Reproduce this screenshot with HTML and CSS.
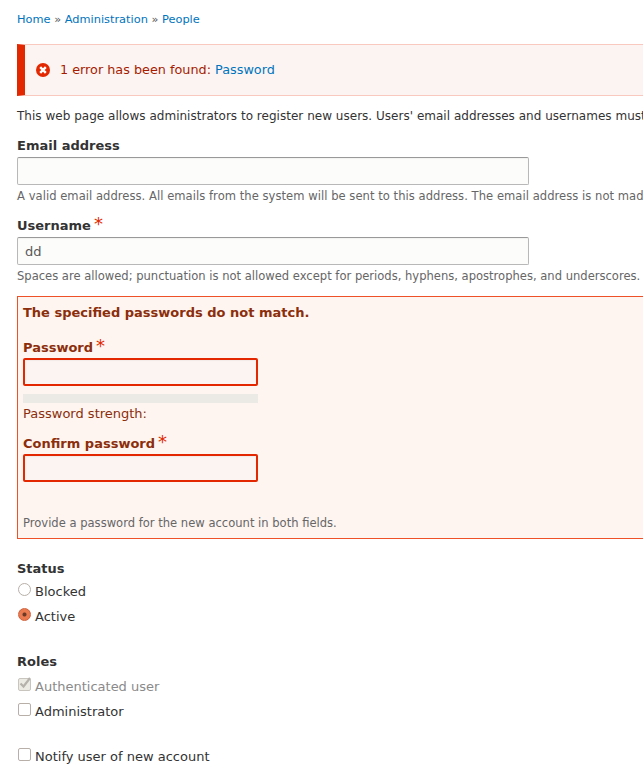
FILE: index.html
```html
<!DOCTYPE html>
<html lang="en">
<head>
<meta charset="utf-8">
<title>People</title>
<link rel="stylesheet" href="styles.css">
</head>
<body>
<div class="page">
  <nav class="crumbs"><a href="#">Home</a> » <a href="#">Administration</a> » <a href="#">People</a></nav>
  <div class="message">
    <svg class="msg-icon" width="16" height="16" viewBox="0 0 16 16"><circle cx="8" cy="8" r="7" fill="#e32700"/><path d="M5.2 5.2l5.6 5.6M10.8 5.2l-5.6 5.6" stroke="#fff" stroke-width="2.4" fill="none"/></svg>
    <span>1 error has been found: <a href="#">Password</a></span>
  </div>
  <p class="intro">This web page allows administrators to register new users. Users' email addresses and usernames must be unique.</p>
  <div class="item first">
    <label class="label">Email address</label>
    <input class="text wide" type="text">
    <div class="desc desc-email">A valid email address. All emails from the system will be sent to this address. The email address is not made public and will only be used if you wish to receive a new password.</div>
  </div>
  <div class="item">
    <label class="label">Username<span class="req">*</span></label>
    <input class="text wide" type="text" value="dd">
    <div class="desc">Spaces are allowed; punctuation is not allowed except for periods, hyphens, apostrophes, and underscores.</div>
  </div>
  <div class="errorbox">
    <div class="errortitle">The specified passwords do not match.</div>
    <label class="label elabel">Password<span class="req">*</span></label>
    <input class="text err" type="password">
    <div class="meter"></div>
    <div class="strength">Password strength:</div>
    <label class="label elabel second">Confirm password<span class="req">*</span></label>
    <input class="text err" type="password">
    <div class="edesc">Provide a password for the new account in both fields.</div>
  </div>
  <div class="group status">
    <div class="label">Status</div>
    <label class="opt first-opt"><span class="radio"></span>Blocked</label>
    <label class="opt"><span class="radio on"></span>Active</label>
  </div>
  <div class="group roles">
    <div class="label">Roles</div>
    <label class="opt first-opt muted"><span class="check disabled"><svg width="13" height="13" viewBox="0 0 13 13"><path d="M2.5 6.5l3 3L12 1" stroke="#b5b2ab" stroke-width="2.2" fill="none"/></svg></span>Authenticated user</label>
    <label class="opt"><span class="check"></span>Administrator</label>
  </div>
  <div class="group notify">
    <label class="opt"><span class="check"></span>Notify user of new account</label>
  </div>
</div>
</body>
</html>
```

FILE: styles.css
```css
html, body {
  margin: 0;
  padding: 0;
  height: 770px;
  overflow: hidden;
  background: #fff;
}
.page {
  width: 1100px;
  box-sizing: border-box;
  padding: 12px 0 0 17px;
  font-family: "DejaVu Sans", sans-serif;
  font-size: 13px;
  line-height: 15px;
  color: #333;
  white-space: nowrap;
}
a { color: #0074bd; text-decoration: none; }
.crumbs { font-size: 11.375px; line-height: 14px; color: #555; }
.message {
  margin-top: 18px;
  height: 52px;
  box-sizing: border-box;
  display: flex;
  align-items: center;
  border: 1px solid #f9c9bf;
  border-left: 8px solid #e32700;
  background: #fcf4f2;
  color: #a51b00;
  padding: 0 0 1px 10px;
  font-size: 12.8px;
}
.msg-icon { margin-right: 9px; flex: none; }
.intro { margin: 13px 0 0; font-size: 12px; letter-spacing: .02px; line-height: 15px; }
.item { margin-top: 14px; }
.item.first { margin-top: 14px; }
.label { display: block; font-weight: bold; font-size: 13px; line-height: 15px; color: #333; }
.req {
  color: #e32700;
  font-size: 18px;
  font-weight: normal;
  margin-left: 3px;
  line-height: 0;
}
.text {
  display: block;
  box-sizing: border-box;
  height: 28px;
  margin: 4px 0 0;
  padding: 0 7px;
  border: 1px solid #b8b8b8;
  border-top-color: #999;
  border-radius: 2px;
  background: #fcfcfa;
  font-family: "DejaVu Sans", sans-serif;
  font-size: 13px;
  color: #595959;
  box-shadow: inset 0 1px 1px rgba(0,0,0,.04);
}
.wide { width: 512px; }
.desc { margin-top: 4px; font-size: 11.56px; line-height: 15px; color: #666; }
.desc-email { letter-spacing: .04px; }
.errorbox {
  margin-top: 12px;
  height: 243px;
  box-sizing: border-box;
  border: 1px solid #ee5127;
  background: #fef5f1;
  padding: 8px 5px 0;
  color: #8c2e0b;
}
.errortitle { font-weight: bold; font-size: 13px; line-height: 15px; }
.elabel { color: #8c2e0b; margin-top: 20px; }
.elabel.second { margin-top: 15px; }
.text.err {
  width: 235px;
  border: 2px solid #e32700;
  background: #fcf4f2;
  margin-top: 3px;
}
.meter { width: 235px; height: 9px; margin-top: 8px; background: #ebeae4; }
.strength { margin-top: 3px; font-size: 13px; line-height: 15px; }
.edesc { margin-top: 34px; font-size: 11.56px; line-height: 15px; color: #666; }
.group { margin-top: 22px; }
.opt { display: flex; align-items: flex-start; height: 15px; color: #333; margin-top: 10px; }
.first-opt { margin-top: 8px; }
.radio, .check {
  flex: none;
  box-sizing: border-box;
  width: 13px;
  height: 13px;
  margin: -1px 4px 0 1px;
  border: 1px solid #b8b0a8;
  background: #fff;
}
.radio { border-radius: 50%; }
.radio.on {
  background: radial-gradient(circle, #6b3a26 0 1.5px, #ea7a50 2.5px);
  border-color: #d0603a;
}
.check { border-radius: 2px; position: relative; }
.check svg { position: absolute; left: -1px; top: -2px; }
.check.disabled { background: #ebebe4; border-color: #c8c5be; }
.muted { color: #8a8a8a; }
.roles { margin-top: 30px; }
.roles .first-opt { margin-top: 10px; }
.notify { margin-top: 30px; }
```
